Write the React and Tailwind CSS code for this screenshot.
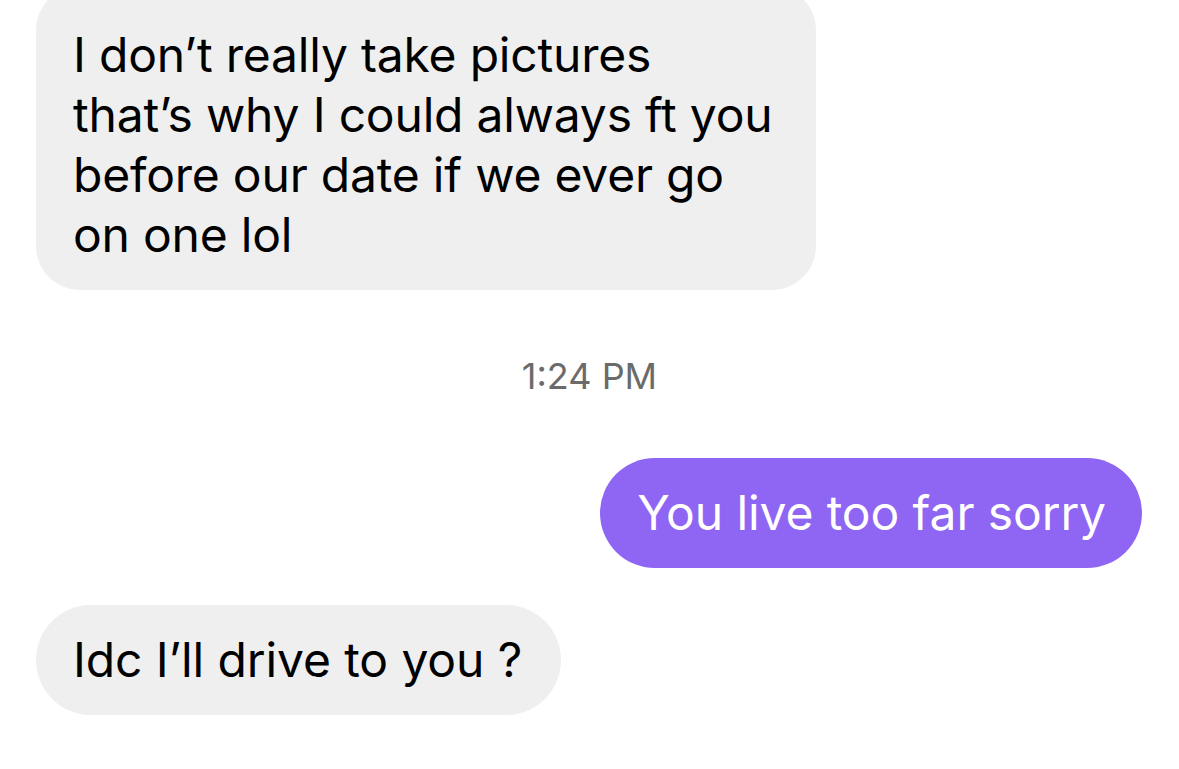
import React from 'react';

const font = { fontFamily: 'Inter, "Liberation Sans", sans-serif' };

const App = () => {
  return (
    <div className="w-[1179px] h-[769px] overflow-hidden bg-white flex flex-col" style={font}>
      <div className="self-start ml-[36px] -mt-[14px] w-[780px] rounded-[44px] bg-[#efefef] pl-[37px] pr-[20px] pt-[39px] pb-[25px] text-[48px] leading-[60px] tracking-[-0.2px] text-black">
        I don’t really take pictures
        <br />
        that’s why I could always ft you
        <br />
        before our date if we ever go
        <br />
        on one lol
      </div>

      <div className="mt-[66px] text-center text-[36px] leading-[40px] text-[#6b6b6b]">1:24 PM</div>

      <div className="self-end mr-[37px] mt-[62px] h-[110px] rounded-full bg-[#8f65f3] pl-[37px] pr-[36px] flex items-center text-[48px] tracking-[-0.1px] text-white">
        You live too far sorry
      </div>

      <div className="self-start ml-[36px] mt-[37px] h-[110px] rounded-full bg-[#efefef] pl-[37px] pr-[39px] flex items-center text-[48px] tracking-[-0.1px] text-black">
        Idc I’ll drive to you ?
      </div>
    </div>
  );
};

export default App;
